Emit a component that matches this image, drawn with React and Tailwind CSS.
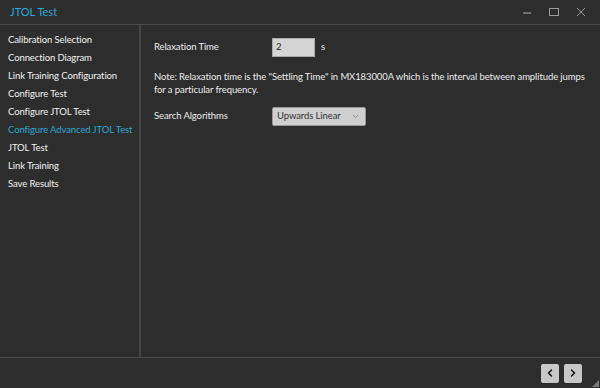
import { ChevronDown, ChevronLeft, ChevronRight } from 'lucide-react'

const steps = [
  'Calibration Selection',
  'Connection Diagram',
  'Link Training Configuration',
  'Configure Test',
  'Configure JTOL Test',
  'Configure Advanced JTOL Test',
  'JTOL Test',
  'Link Training',
  'Save Results',
]

const ACTIVE = 'Configure Advanced JTOL Test'

export default function App() {
  return (
    <div
      className="flex h-[388px] w-[600px] flex-col overflow-hidden bg-[#2d2d2d] text-[9.5px] tracking-[-0.1px] text-[#ececec]"
      style={{ fontFamily: 'Lato, "Liberation Sans", sans-serif' }}
    >
      <header className="flex h-[25px] shrink-0 items-center justify-between border-b border-[#4a4a4a] pl-[10px] pr-[14px]">
        <span className="text-[11px] tracking-normal text-[#2aa8d8]">JTOL Test</span>
        <div className="flex items-center gap-[17px] text-[#9a9a9a]">
          <svg width="10" height="10" viewBox="0 0 10 10">
            <path d="M1 6h8" stroke="currentColor" strokeWidth="1.2" />
          </svg>
          <svg width="10" height="10" viewBox="0 0 10 10">
            <rect x="0.5" y="1.5" width="9" height="7" fill="none" stroke="currentColor" />
          </svg>
          <svg width="10" height="10" viewBox="0 0 10 10">
            <path d="M1 1l8 8M9 1l-8 8" stroke="currentColor" strokeWidth="1" />
          </svg>
        </div>
      </header>

      <div className="flex min-h-0 flex-1 border-b border-[#4a4a4a]">
        <nav className="w-[141px] shrink-0 border-r-2 border-[#444] pt-[6px]">
          <ul>
            {steps.map((step) => (
              <li
                key={step}
                className={`h-[18px] whitespace-nowrap pl-[8px] leading-[18px] ${step === ACTIVE ? 'text-[#2aa8d8]' : 'text-[#f2f2f2]'}`}
              >
                {step}
              </li>
            ))}
          </ul>
        </nav>

        <main className="min-w-0 flex-1 pl-[13px] pt-[13px]">
          <div className="flex items-center">
            <span className="w-[118px] whitespace-nowrap">Relaxation Time</span>
            <div className="flex h-[19px] w-[43px] items-center border border-[#aaa] bg-[#d4d4d4] px-[3px] text-[#222]">
              2
            </div>
            <span className="ml-[6px]">s</span>
          </div>

          <p className="mt-[13px] whitespace-nowrap leading-[13px]">
            Note: Relaxation time is the "Settling Time" in MX183000A which is the interval between amplitude jumps
            <br />
            for a particular frequency.
          </p>

          <div className="mt-[11px] flex items-center">
            <span className="w-[118px] whitespace-nowrap">Search Algorithms</span>
            <div className="flex h-[19px] w-[94px] items-center justify-between rounded-[2px] border border-[#999] bg-[#cfcfcf] pl-[4px] pr-[5px] text-[#333]">
              <span className="whitespace-nowrap">Upwards Linear</span>
              <ChevronDown size={9} strokeWidth={2} className="text-[#777]" />
            </div>
          </div>
        </main>
      </div>

      <footer className="relative flex h-[30px] shrink-0 items-center justify-end gap-[5px] pr-[18px]">
        <button className="flex h-[19px] w-[18px] items-center justify-center rounded-[2px] bg-[#c8c8c8] text-[#111]">
          <ChevronLeft size={12} strokeWidth={3} />
        </button>
        <button className="flex h-[19px] w-[18px] items-center justify-center rounded-[2px] bg-[#c8c8c8] text-[#111]">
          <ChevronRight size={12} strokeWidth={3} />
        </button>
        <svg className="absolute bottom-[1px] right-[1px]" width="7" height="7" viewBox="0 0 7 7">
          <path d="M7 0L7 7L0 7Z" fill="#777" />
        </svg>
      </footer>
    </div>
  )
}
